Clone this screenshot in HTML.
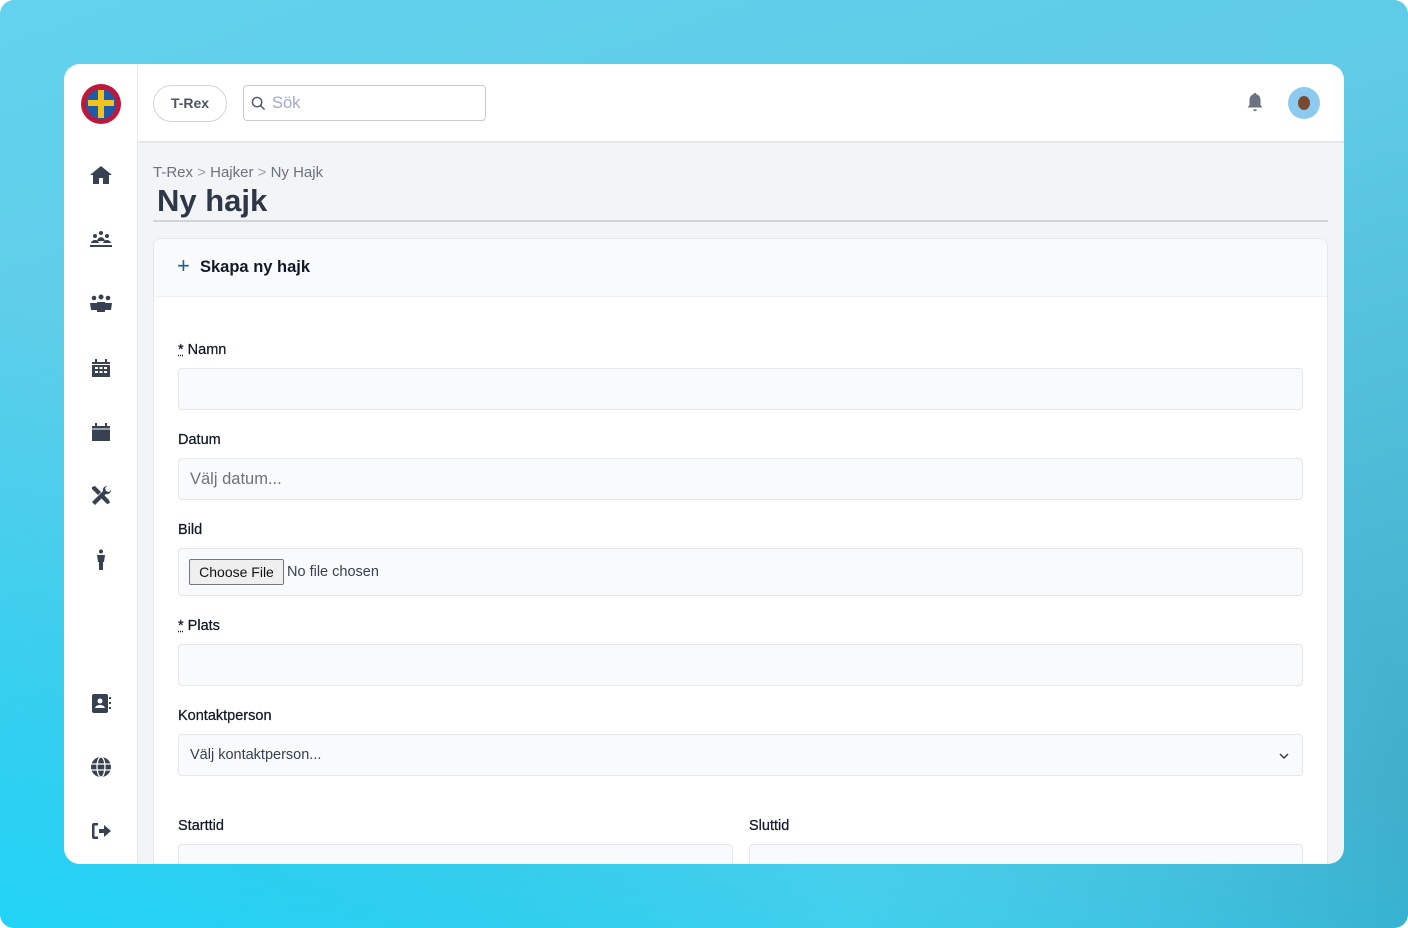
<!DOCTYPE html>
<html><head><meta charset="utf-8"><style>
*{box-sizing:border-box;margin:0;padding:0}
html{background:#fff}
body{width:1408px;height:928px;overflow:hidden;font-family:"Liberation Sans",sans-serif;background:linear-gradient(160deg,#62d2ee 0%,#5fcbe6 40%,#3aa8c6 100%);position:relative;border-radius:14px}
.bgl{position:absolute;inset:0;border-radius:14px;background:linear-gradient(20deg,#22d4f7 0%,rgba(80,210,240,0) 45%),radial-gradient(ellipse at 60% 100%,rgba(120,220,240,.6),rgba(0,0,0,0) 50%)}
.card{position:absolute;left:64px;top:64px;width:1280px;height:800px;background:#f3f4f6;border-radius:16px;overflow:hidden}
.side{position:absolute;left:0;top:0;width:74px;height:800px;background:#fff;border-right:1px solid #e5e7eb}
.head{position:absolute;left:74px;top:0;right:0;height:79px;background:#fff;border-bottom:2px solid #e5e7eb}
.ic{position:absolute;left:25px;width:24px;height:24px}
.lbl{position:absolute;left:114px;font-size:14.5px;color:#111827;-webkit-text-stroke:.25px #111827}
.inp{position:absolute;left:114px;width:1125px;height:42px;background:#f9fafb;border:1px solid #e5e7eb;border-radius:4px;font-size:14.5px;color:#374151}
</style></head><body><div class="bgl"></div>
<div class="card">
<div class="side">
 <svg style="position:absolute;left:16px;top:19px" width="42" height="42" viewBox="0 0 42 42"><circle cx="21" cy="21" r="20" fill="#c0173a"/><circle cx="21" cy="21" r="15" fill="#1f5aa8"/><rect x="18" y="7" width="6" height="28" fill="#f1c21b"/><rect x="8" y="17" width="26" height="6" fill="#f1c21b"/></svg>
 <svg class="ic" style="top:99px" viewBox="0 0 24 24" fill="#374151"><path d="M12 3L1 12h3v9h6v-6h4v6h6v-9h3z"/></svg>
 <svg class="ic" style="top:164px" viewBox="0 0 24 24" fill="#374151"><circle cx="12" cy="5" r="2"/><circle cx="6" cy="8" r="2"/><circle cx="18" cy="8" r="2"/><path d="M2 15c1-4 7-4 8 0zM14 15c1-4 7-4 8 0zM8 13c1-5 7-5 8 0z"/><rect x="1" y="17" width="22" height="2"/></svg>
 <svg class="ic" style="top:228px" viewBox="0 0 24 24" fill="#374151"><circle cx="5" cy="6" r="2.3"/><circle cx="12" cy="5" r="2.5"/><circle cx="19" cy="6" r="2.3"/><path d="M1 11h7v7H2zM8 10h8v10H8zM16 11h7l-1 7h-6z"/></svg>
 <svg class="ic" style="top:292px" viewBox="0 0 24 24" fill="#374151"><path d="M3 6h18v15H3z"/><rect x="6" y="3" width="2" height="4"/><rect x="16" y="3" width="2" height="4"/><g fill="#fff"><rect x="6" y="11" width="3" height="2"/><rect x="10.5" y="11" width="3" height="2"/><rect x="15" y="11" width="3" height="2"/><rect x="6" y="15" width="3" height="2"/><rect x="10.5" y="15" width="3" height="2"/><rect x="15" y="15" width="3" height="2"/></g><rect x="3" y="8" width="18" height="1" fill="#fff"/></svg>
 <svg class="ic" style="top:356px" viewBox="0 0 24 24" fill="#374151"><path d="M3 6h18v15H3z"/><rect x="6" y="3" width="2" height="4"/><rect x="16" y="3" width="2" height="4"/><rect x="3" y="8.5" width="18" height="1" fill="#fff"/></svg>
 <svg class="ic" style="top:420px" viewBox="0 0 24 24" fill="#374151"><path d="M3 3l3-1 6 6-3 3-6-6z"/><path d="M12 14l6 6 3-1-1-3-6-6z"/><path d="M18 2a4 4 0 00-4 5L3 18l3 3L17 10a4 4 0 005-4l-2 2-3-1-1-3z"/></svg>
 <svg class="ic" style="top:484px" viewBox="0 0 24 24" fill="#374151"><circle cx="12" cy="3.5" r="2"/><path d="M8 7h8l-1 7h-1v8h-4v-8H9z"/></svg>
 <svg class="ic" style="top:627px" viewBox="0 0 24 24" fill="#374151"><rect x="3" y="3" width="16" height="19" rx="2"/><circle cx="11" cy="10" r="2.5" fill="#fff"/><path d="M6 17c1-4 9-4 10 0z" fill="#fff"/><rect x="20" y="6" width="2" height="2"/><rect x="20" y="11" width="2" height="2"/><rect x="20" y="16" width="2" height="2"/></svg>
 <svg class="ic" style="top:691px" viewBox="0 0 24 24" fill="#374151"><circle cx="12" cy="12" r="10"/><g stroke="#fff" stroke-width="1.3" fill="none"><ellipse cx="12" cy="12" rx="4" ry="10"/><path d="M2 9h20M2 15h20"/></g></svg>
 <svg class="ic" style="top:755px" viewBox="0 0 24 24" fill="#374151"><path d="M9 4H5a2 2 0 00-2 2v12a2 2 0 002 2h4v-2.5H5.5v-11H9z"/><path d="M10 10h5V6l7 6-7 6v-4h-5z"/></svg>
</div>
<div class="head">
 <div style="position:absolute;left:15px;top:21px;width:74px;height:37px;border:1px solid #d1d5db;border-radius:19px;font-size:14px;font-weight:bold;color:#4b5563;text-align:center;line-height:35px">T-Rex</div>
 <div style="position:absolute;left:105px;top:21px;width:243px;height:36px;border:1px solid #c7c9d9;border-radius:4px"><svg style="position:absolute;left:7px;top:10px" width="15" height="15" viewBox="0 0 16 16" fill="none" stroke="#4b5563" stroke-width="1.5"><circle cx="6.5" cy="6.5" r="5"/><path d="M10 10l4.5 4.5"/></svg><span style="position:absolute;left:28px;top:8px;font-size:16.5px;color:#a3a8cc">Sök</span></div>
 <svg style="position:absolute;left:1106px;top:27px" width="22" height="22" viewBox="0 0 24 24" fill="#6b7280"><path d="M12 2c1 0 1.5.7 1.5 1.5C17 4.5 18 7 18 10v5l2 3H4l2-3v-5c0-3 1-5.5 4.5-6.5C10.5 2.7 11 2 12 2z"/><path d="M10 20h4a2 2 0 01-4 0z"/></svg>
 <div style="position:absolute;left:1150px;top:23px;width:32px;height:32px;border-radius:50%;background:#8ccbef"><div style="position:absolute;left:10px;top:9px;width:12px;height:14px;border-radius:50%;background:#7a4a30"></div></div>
</div>
<div style="position:absolute;left:89px;top:100px;font-size:15px;color:#6b7280">T-Rex <span style="color:#9ca3af">&gt;</span> Hajker <span style="color:#9ca3af">&gt;</span> Ny Hajk</div>
<div style="position:absolute;left:93px;top:119px;font-size:31px;font-weight:bold;color:#2d3748">Ny hajk</div>
<div style="position:absolute;left:89px;top:156px;width:1175px;height:2px;background:#d1d5db"></div>
<div style="position:absolute;left:89px;top:174px;width:1175px;height:640px;background:#fff;border:1px solid #e5e7eb;border-radius:8px;overflow:hidden">
 <div style="height:58px;background:#f9fafb;border-bottom:1px solid #f0f1f3;position:relative"><span style="position:absolute;left:23px;top:14px;font-size:22px;color:#1e5aa0">+</span><span style="position:absolute;left:46px;top:19px;font-size:16.5px;font-weight:bold;color:#111827">Skapa ny hajk</span></div>
</div>
<div class="lbl" style="top:278px"><u style="text-decoration-style:dotted">*</u> Namn</div>
<div class="inp" style="top:304px"></div>
<div class="lbl" style="top:368px">Datum</div>
<div class="inp" style="top:394px"><span style="position:absolute;left:11px;top:11px;font-size:16.5px;color:#6b7280">Välj datum...</span></div>
<div class="lbl" style="top:458px">Bild</div>
<div class="inp" style="top:484px;height:48px"><span style="position:absolute;left:10px;top:10px;height:26px;width:95px;border:1px solid #767676;border-radius:2px;background:#efefef;font-size:14px;line-height:24px;text-align:center;color:#111">Choose File</span><span style="position:absolute;left:108px;top:15px">No file chosen</span></div>
<div class="lbl" style="top:554px"><u style="text-decoration-style:dotted">*</u> Plats</div>
<div class="inp" style="top:580px"></div>
<div class="lbl" style="top:644px">Kontaktperson</div>
<div class="inp" style="top:670px"><span style="position:absolute;left:11px;top:12px">Välj kontaktperson...</span><svg style="position:absolute;right:12px;top:15px" width="12" height="12" viewBox="0 0 12 12" fill="none" stroke="#374151" stroke-width="1.5"><path d="M2 4l4 4 4-4"/></svg></div>
<div class="lbl" style="top:754px">Starttid</div>
<div class="lbl" style="top:754px;left:685px">Sluttid</div>
<div class="inp" style="top:780px;width:555px"></div>
<div class="inp" style="top:780px;left:685px;width:554px"></div>
</div>
</body></html>
